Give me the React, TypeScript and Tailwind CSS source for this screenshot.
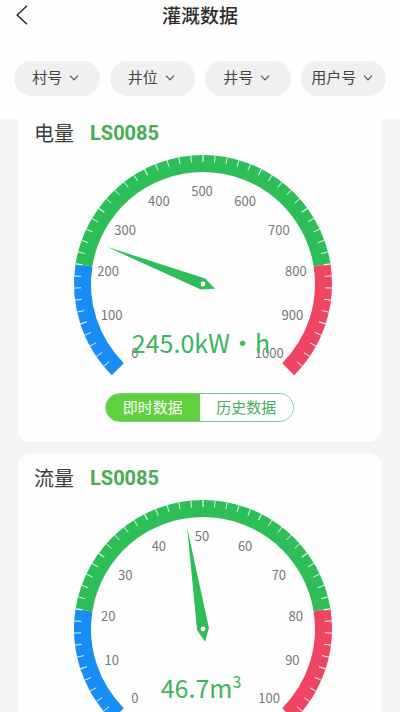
import { useState } from "react";

const RADIUS = 129;
const BAND = 17;
const LABEL_RADIUS = 95;

// The dial sweeps 270 degrees clockwise, from lower left to lower right.
function polar(fraction: number, radius: number) {
  const angle = ((225 - fraction * 270) * Math.PI) / 180;
  return { x: radius * Math.cos(angle), y: -radius * Math.sin(angle) };
}

function bandPath(from: number, to: number) {
  const inner = RADIUS - BAND;
  const a = polar(from, RADIUS);
  const b = polar(to, RADIUS);
  const c = polar(to, inner);
  const d = polar(from, inner);
  const large = (to - from) * 270 > 180 ? 1 : 0;
  return `M${a.x} ${a.y}A${RADIUS} ${RADIUS} 0 ${large} 1 ${b.x} ${b.y}L${c.x} ${c.y}A${inner} ${inner} 0 ${large} 0 ${d.x} ${d.y}Z`;
}

const bands = [
  { from: 0, to: 0.2, color: "#188df5" },
  { from: 0.2, to: 0.8, color: "#2ebe58" },
  { from: 0.8, to: 1, color: "#f04463" },
];

type GaugeProps = { value: number; max: number; text: string; power?: string };

function Gauge({ value, max, text, power }: GaugeProps) {
  const ticks = Array.from({ length: 49 }, (_, i) => i + 1);
  const labels = Array.from({ length: 11 }, (_, i) => i);
  return (
    <svg
      viewBox="-143 -136 280 245"
      className="mx-auto block h-[245px] w-[280px]"
      role="img"
      aria-label={text}
    >
      {bands.map((b) => (
        <path key={b.color} d={bandPath(b.from, b.to)} fill={b.color} />
      ))}
      {ticks.map((i) => {
        const a = polar(i / 50, RADIUS);
        const b = polar(i / 50, RADIUS - 7);
        return (
          <line
            key={i}
            x1={a.x}
            y1={a.y}
            x2={b.x}
            y2={b.y}
            stroke="#e4f8ea"
            strokeWidth={i % 5 === 0 ? 1.2 : 1}
          />
        );
      })}
      {labels.map((i) => {
        const p = polar(i / 10, LABEL_RADIUS);
        return (
          <text
            key={i}
            x={p.x - 1}
            y={p.y + 7}
            textAnchor="middle"
            className="fill-[#777777] text-[13px]"
          >
            {(max / 10) * i}
          </text>
        );
      })}
      <path
        d="M0 -103L6 0L0 13L-6 0Z"
        fill="#2ebe58"
        transform={`rotate(${-135 + (value / max) * 270})`}
      />
      <circle r="2.4" fill="#ffffff" />
      <text x="-2" y="69" textAnchor="middle" className="fill-[#3bb45d] text-[25px]">
        {text}
        {power && (
          <tspan dy="-10" className="text-base">
            {power}
          </tspan>
        )}
      </text>
    </svg>
  );
}

function Segmented() {
  const [active, setActive] = useState(0);
  return (
    <div className="mx-auto flex h-[29px] w-[189px] overflow-hidden rounded-full border border-[#7cc98a]">
      {["即时数据", "历史数据"].map((label, i) => (
        <button
          key={label}
          type="button"
          aria-pressed={active === i}
          onClick={() => setActive(i)}
          className={
            active === i
              ? "flex-1 bg-[#60d13e] pb-[2px] text-[15px] leading-none text-white"
              : "flex-1 bg-white pb-[2px] text-[15px] leading-none text-[#45ae5b]"
          }
        >
          {label}
        </button>
      ))}
    </div>
  );
}

type CardProps = GaugeProps & { title: string; code: string };

function MeterCard({ title, code, ...gauge }: CardProps) {
  return (
    <section className="shrink-0 rounded-xl bg-[#fefefe] pt-[10px] pb-5">
      <h2 className="flex h-[30px] items-center gap-4 px-4 text-xl text-[#3c3c3c]">
        <span>{title}</span>
        <span className="font-[Roboto,sans-serif] font-bold text-[#45ae52]">{code}</span>
      </h2>
      <Gauge {...gauge} />
      <Segmented />
    </section>
  );
}

function Filter({ label }: { label: string }) {
  return (
    <label className="flex h-[35px] flex-1 items-center justify-center gap-[6px] rounded-full bg-[#f0f0f0] pr-[2px] pb-[2px]">
      <select
        aria-label={label}
        className="appearance-none bg-transparent text-[15px] text-[#444444] outline-none"
      >
        <option>{label}</option>
      </select>
      <svg viewBox="0 0 10 6" className="h-[6px] w-[10px]" fill="none" stroke="#555555" strokeWidth="1.2">
        <path d="M1 0.7L5 4.8L9 0.7" />
      </svg>
    </label>
  );
}

export default function App() {
  return (
    <div className="flex h-screen flex-col overflow-hidden bg-[#f4f4f4] font-['Noto_Sans_CJK_SC',sans-serif]">
      <header className="z-10 shrink-0 bg-[#fefefe] pb-[23px]">
        <div className="relative flex h-[31px] items-center justify-center">
          <button type="button" aria-label="返回" className="absolute top-[5px] left-4">
            <svg viewBox="0 0 12 20" className="h-5 w-3" fill="none" stroke="#2c2c2c" strokeWidth="1.5">
              <path d="M11 0.8L1.2 10L11 19.2" />
            </svg>
          </button>
          <h1 className="text-[19px] font-medium text-[#2c2c2c]">灌溉数据</h1>
        </div>
        <div className="mt-[30px] flex gap-[10px] px-[14px]">
          <Filter label="村号" />
          <Filter label="井位" />
          <Filter label="井号" />
          <Filter label="用户号" />
        </div>
      </header>
      <main className="-mt-[11px] flex min-h-0 flex-1 flex-col gap-[11px] overflow-y-auto pr-[19px] pl-[18px] [scrollbar-width:none]">
        <MeterCard title="电量" code="LS0085" value={245} max={1000} text="245.0kW・h" />
        <MeterCard title="流量" code="LS0085" value={46.7} max={100} text="46.7m" power="3" />
      </main>
    </div>
  );
}
